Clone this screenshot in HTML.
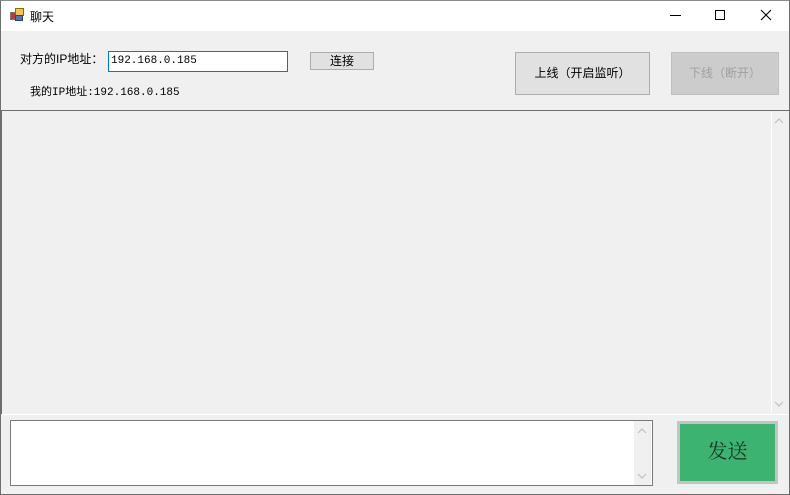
<!DOCTYPE html>
<html><head><meta charset="utf-8"><style>
*{box-sizing:border-box;margin:0;padding:0}
body{width:790px;height:495px;overflow:hidden;background:#f0f0f0;font-family:"Liberation Sans","Noto Sans CJK SC",sans-serif;font-size:12px;color:#000;position:relative}
.a{position:absolute}
.win{left:0;top:0;width:790px;height:495px;border:1px solid #6e6e6e;border-top-color:#8a8a8a}
.title{left:1px;top:1px;width:788px;height:30px;background:#fff}
.btn{background:#e1e1e1;border:1px solid #adadad;text-align:center}
.mono{font-family:"Liberation Mono","Noto Sans CJK SC",monospace;font-size:11px}
</style></head><body>
<div class="a title"></div>
<svg class="a" style="left:10px;top:8px" width="14" height="14" viewBox="0 0 14 14">
<rect x="0.5" y="4.5" width="5" height="7" fill="#c33" stroke="#777"/>
<rect x="5.5" y="0.5" width="8" height="7" fill="#f5c542" stroke="#8a6a10"/>
<rect x="5.5" y="7.5" width="7" height="5" fill="#3b7bd4" stroke="#346"/>
</svg>
<div class="a" style="left:30px;top:8px;font-size:12px">聊天</div>
<div class="a" style="left:670px;top:15px;width:11px;height:1px;background:#000"></div>
<div class="a" style="left:715px;top:10px;width:10px;height:10px;border:1px solid #000"></div>
<svg class="a" style="left:760px;top:9px" width="12" height="12"><path d="M1 1L11 11M11 1L1 11" stroke="#000" stroke-width="1.1"/></svg>

<div class="a" style="left:20px;top:50px">对方的IP地址：</div>
<div class="a mono" style="left:108px;top:51px;width:180px;height:21px;border:1px solid #0078d7;background:#fff;padding:3px 2px">192.168.0.185</div>
<div class="a btn" style="left:310px;top:52px;width:64px;height:18px;line-height:16px">连接</div>
<div class="a mono" style="left:30px;top:83px;font-size:11px">我的IP地址:192.168.0.185</div>
<div class="a btn" style="left:515px;top:52px;width:135px;height:43px;line-height:41px">上线（开启监听）</div>
<div class="a btn" style="left:671px;top:52px;width:108px;height:43px;line-height:41px;background:#cccccc;border-color:#bfbfbf;color:#a0a0a0">下线（断开）</div>

<div class="a" style="left:0;top:110px;width:789px;height:305px;border-top:1px solid #6e6e6e;border-left:2px solid #6e6e6e;border-bottom:1px solid #fff;background:#f0f0f0"></div>
<div class="a" style="left:771px;top:112px;width:17px;height:301px;border-left:1px solid #fff"></div>
<svg class="a" style="left:774px;top:118px" width="10" height="6"><path d="M1 5L5 1L9 5" stroke="#c0c0c0" fill="none" stroke-width="1.2"/></svg>
<svg class="a" style="left:774px;top:401px" width="10" height="6"><path d="M1 1L5 5L9 1" stroke="#c0c0c0" fill="none" stroke-width="1.2"/></svg>

<div class="a" style="left:10px;top:420px;width:643px;height:66px;border:1px solid #7a7a7a;background:#fff"></div>
<div class="a" style="left:634px;top:421px;width:17px;height:64px;background:#f0f0f0"></div>
<svg class="a" style="left:637px;top:428px" width="10" height="6"><path d="M1 5L5 1L9 5" stroke="#c0c0c0" fill="none" stroke-width="1.2"/></svg>
<svg class="a" style="left:637px;top:473px" width="10" height="6"><path d="M1 1L5 5L9 1" stroke="#c0c0c0" fill="none" stroke-width="1.2"/></svg>

<div class="a" style="left:677px;top:421px;width:101px;height:63px;border:3px solid #c4c4c4;background:#3cb371;text-align:center;line-height:57px;font-size:20px;font-family:'Liberation Serif','Noto Serif CJK SC',serif;color:#163524">发送</div>
<div class="a win"></div>
</body></html>
